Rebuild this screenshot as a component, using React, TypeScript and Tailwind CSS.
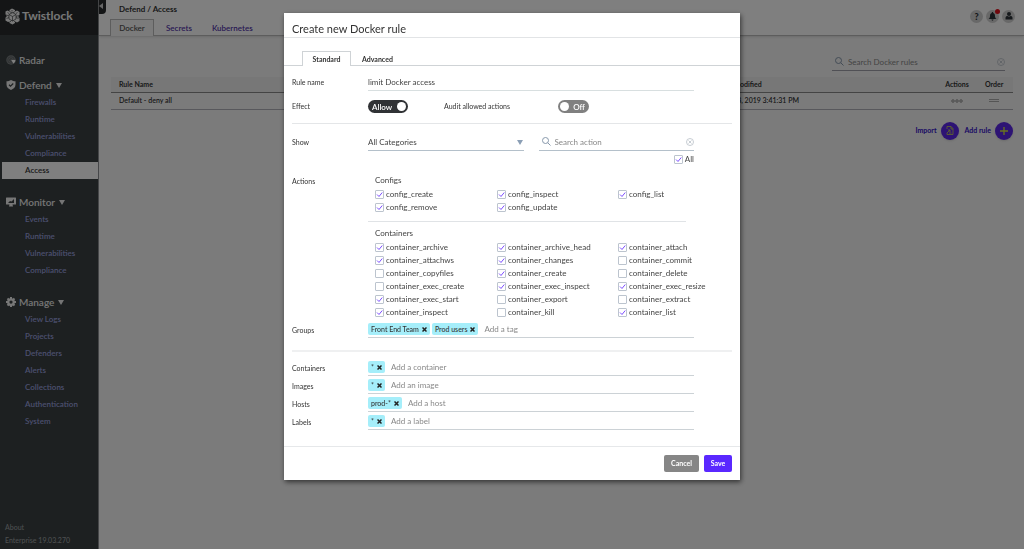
import type { ReactNode } from "react";

const menus = [
  {
    title: "Defend",
    icon: "shield",
    items: ["Firewalls", "Runtime", "Vulnerabilities", "Compliance", "Access"],
  },
  {
    title: "Monitor",
    icon: "monitor",
    items: ["Events", "Runtime", "Vulnerabilities", "Compliance"],
  },
  {
    title: "Manage",
    icon: "gear",
    items: ["View Logs", "Projects", "Defenders", "Alerts", "Collections", "Authentication", "System"],
  },
];

const configs = [
  ["config_create", true],
  ["config_inspect", true],
  ["config_list", true],
  ["config_remove", true],
  ["config_update", true],
] as [string, boolean][];

const containers = [
  ["container_archive", true],
  ["container_archive_head", true],
  ["container_attach", true],
  ["container_attachws", true],
  ["container_changes", true],
  ["container_commit", false],
  ["container_copyfiles", false],
  ["container_create", true],
  ["container_delete", false],
  ["container_exec_create", false],
  ["container_exec_inspect", true],
  ["container_exec_resize", true],
  ["container_exec_start", true],
  ["container_export", false],
  ["container_extract", false],
  ["container_inspect", true],
  ["container_kill", false],
  ["container_list", true],
] as [string, boolean][];

function MenuIcon({ name }: { name: string }) {
  if (name === "radar") {
    return (
      <svg className="w-[10px] h-[10px]" viewBox="0 0 20 20">
        <circle cx="10" cy="10" r="9.5" fill="#7c8082" />
        <circle cx="10" cy="10" r="6.5" fill="none" stroke="#4d5355" strokeWidth="1.2" />
        <circle cx="10" cy="10" r="3" fill="none" stroke="#4d5355" strokeWidth="1.2" />
        <path d="M9 9h11a10 10 0 0 1-5.500 9z" fill="#fff" stroke="#3a4143" strokeWidth="1" />
      </svg>
    );
  }
  if (name === "shield") {
    return (
      <svg className="w-[10px] h-[10px]" viewBox="0 0 20 20">
        <path d="M10 0c3 2 6 2.500 9 2.500V9c0 5.500-4 9-9 11-5-2-9-5.500-9-11V2.500C4 2.500 7 2 10 0z" fill="#eee" />
        <path d="M6 9.500l3 3 5.500-5.500" fill="none" stroke="#3a4143" strokeWidth="2.200" />
      </svg>
    );
  }
  if (name === "monitor") {
    return (
      <svg className="w-[10px] h-[10px]" viewBox="0 0 20 20">
        <path d="M1 1h18a1 1 0 0 1 1 1v12a1 1 0 0 1-1 1h-6l1 4H6l1-4H1a1 1 0 0 1-1-1V2a1 1 0 0 1 1-1z" fill="#eee" />
        <path d="M4 12l4-4 3 1 5-5v8z" fill="#3a4143" />
      </svg>
    );
  }
  return (
    <svg className="w-[10px] h-[10px]" viewBox="0 0 20 20">
      <circle cx="10" cy="10" r="5.500" fill="none" stroke="#eee" strokeWidth="4.500" />
      <path d="M10 0v4M10 16v4M0 10h4M16 10h4M3 3l3 3M14 14l3 3M17 3l-3 3M6 14l-3 3" stroke="#eee" strokeWidth="4" />
    </svg>
  );
}

function Caret() {
  return (
    <svg className="w-[6px] h-[5px]" viewBox="0 0 6 5">
      <path d="M0 0h6L3 5z" fill="currentColor" />
    </svg>
  );
}

function SearchIcon() {
  return (
    <svg className="w-[9px] h-[9px] shrink-0" viewBox="0 0 18 18" fill="none" stroke="#8798ab" strokeWidth="2">
      <circle cx="7" cy="7" r="6" />
      <path d="M11.500 11.500L17 17" />
    </svg>
  );
}

function ClearIcon() {
  return (
    <svg className="w-2 h-2" viewBox="0 0 16 16" fill="none" stroke="#b4bcc4" strokeWidth="1.500">
      <circle cx="8" cy="8" r="7" />
      <path d="M5 5l6 6M11 5l-6 6" />
    </svg>
  );
}

function Logo() {
  return (
    <svg className="w-[15px] h-[17px] shrink-0" viewBox="0 0 30 34">
      <path d="M14 1l6 3v3l4-2 5 3v6l-2 1v4l2 1v6l-5 3-4-2v3l-5 3-6-3v-3l-3 1-5-3v-6l2-1v-4l-2-1V7l4-2 4 2V4z" fill="#f2f2f2" />
      <g fill="none" stroke="#282b2d" strokeWidth="1.200">
        <path d="M15 9l7 4v9l-7 4-7-4v-9zM8 13l7 4 7-4M15 17v9" />
        <path d="M9 7l5 3M20 7l-5 3M3 14l5 2M27 15l-5 2M3 21l5-2M27 21l-5-2M10 28l3-3M20 28l-3-3M14 4v3M5 9l3 2M25 9l-3 2" />
      </g>
    </svg>
  );
}

function Sidebar() {
  return (
    <aside className="w-[99px] shrink-0 flex flex-col bg-[#3a4143] border-r border-[#8c8f92]">
      <div className="h-[35px] bg-[#282b2d] flex items-center pl-[5px] gap-[2px] pb-[3px] text-[#eee] text-[12px] font-bold">
        <Logo />
        <span>Twistlock</span>
      </div>
      <nav className="text-[#eaeaea]">
        <a href="#radar" className="mt-[17px] h-4 flex items-center gap-[3px] pl-[6px] text-[10px] font-semibold">
          <MenuIcon name="radar" />
          Radar
        </a>
        <div className="mt-[9px] flex flex-col gap-[15px]">
          {menus.map((menu) => (
            <div key={menu.title}>
              <button className="h-4 flex items-center gap-[3px] pl-[6px] text-[10px] font-semibold">
                <MenuIcon name={menu.icon} />
                <span className="mr-px">{menu.title}</span>
                <Caret />
              </button>
              <ul className="mt-px text-[8px] leading-[17px] font-semibold text-[#989fdc]">
                {menu.items.map((item) => (
                  <li key={item}>
                    <a
                      href="#menu"
                      className={item === "Access" ? "block ml-[2px] pl-[23px] bg-white text-[#333]" : "block pl-[25px]"}
                    >
                      {item}
                    </a>
                  </li>
                ))}
              </ul>
            </div>
          ))}
        </div>
      </nav>
      <div className="mt-auto pl-[5px] pb-[2px] text-[7px] leading-[13px] text-[#999d9f] font-medium">
        <p>About</p>
        <p>Enterprise 19.03.270</p>
      </div>
    </aside>
  );
}

function RoundIcon({ label, children }: { label: string; children: ReactNode }) {
  return (
    <button aria-label={label} className="relative w-[13px] h-[13px] rounded-full bg-[#d0d0d0] flex items-center justify-center text-[#2c3338]">
      {children}
    </button>
  );
}

function TopBar() {
  return (
    <header className="relative h-9 bg-white border-b border-[#bbb] shadow-sm flex justify-between">
      <button aria-label="Collapse" className="absolute left-0 top-0 w-[7px] h-[14px] pt-[3px] flex items-start bg-[#282b2d] rounded-br-sm">
        <svg className="w-[5px] h-[6px]" viewBox="0 0 5 6">
          <path d="M4 0v6L0 3z" fill="#ccc" />
        </svg>
      </button>
      <div className="pl-[11px] flex flex-col justify-between">
        <h1 className="pl-[9px] pt-[3px] text-[8px] leading-[13px] font-bold text-[#333]">Defend / Access</h1>
        <nav className="flex items-end text-[8px] leading-4 font-semibold text-[#5233a8] -mb-px">
          <a href="#docker" className="w-11 text-center bg-[#f7f7f7] border border-b-0 border-[#bbb] text-[#555]">Docker</a>
          <a href="#secrets" className="pl-3">Secrets</a>
          <a href="#kubernetes" className="pl-5">Kubernetes</a>
        </nav>
      </div>
      <div className="flex items-center gap-[3px] pr-[9px] pb-[3px]">
        <RoundIcon label="Help">
          <span className="text-[9px] leading-none font-black">?</span>
        </RoundIcon>
        <RoundIcon label="Notifications">
          <svg className="w-[9px] h-[9px]" viewBox="0 0 18 18" fill="currentColor">
            <path d="M9 0c1.200 0 1.500 1 1.500 1.800C13 2.500 14 5 14 8c0 3 1 4.500 3 6H1c2-1.500 3-3 3-6 0-3 1-5.500 3.500-6.200C7.500 1 7.800 0 9 0zM7 15h4c0 3-4 3-4 0z" />
          </svg>
          <span className="absolute -top-px -right-px w-[5px] h-[5px] rounded-full bg-[#e0101c]"></span>
        </RoundIcon>
        <RoundIcon label="Account">
          <svg className="w-2 h-2" viewBox="0 0 16 16" fill="currentColor">
            <circle cx="8" cy="4" r="4" />
            <path d="M1 15v-3c0-3 2-4 4-4 2 1.500 4 1.500 6 0 2 0 4 1 4 4v3z" />
          </svg>
        </RoundIcon>
      </div>
    </header>
  );
}

function RulesPage() {
  return (
    <main className="flex-1 bg-[#f7f7f7]">
      <TopBar />
      <div className="pl-3 pr-[11px] pt-[17px]">
        <label className="ml-auto mr-2 w-[173px] h-[18px] flex items-center gap-1 pl-[3px] border-b border-[#a0a0aa]">
          <SearchIcon />
          <input aria-label="Search rules" placeholder="Search Docker rules" className="flex-1 min-w-0 text-[8px] placeholder:text-[#888]" />
          <ClearIcon />
        </label>
        <table className="mt-[6px] w-full table-fixed text-[7px] text-left font-semibold text-[#333]">
          <thead>
            <tr className="h-[15px] bg-[#efefef] border-b border-[#888]">
              <th className="pl-2 w-[608px]">Rule Name</th>
              <th>Last Modified</th>
              <th className="w-[50px] text-center">Actions</th>
              <th className="w-[31px] pl-[3px]">Order</th>
            </tr>
          </thead>
          <tbody>
            <tr className="h-[17px] border-b border-[#b0b0b8]">
              <td className="pl-2">Default - deny all</td>
              <td className="pl-1">Mar 8, 2019 3:41:31 PM</td>
              <td>
                <svg className="mx-auto w-3 h-1" viewBox="0 0 24 8" fill="none" stroke="#777" strokeWidth="1.600">
                  <circle cx="4" cy="4" r="2.500" />
                  <circle cx="12" cy="4" r="2.500" />
                  <circle cx="20" cy="4" r="2.500" />
                </svg>
              </td>
              <td>
                <svg className="ml-[7px] w-[10px] h-[3px]" viewBox="0 0 10 3">
                  <path d="M0 .5h10M0 2.500h10" stroke="#aaa" />
                </svg>
              </td>
            </tr>
          </tbody>
        </table>
        <div className="mt-3 flex justify-end items-center text-[7px] font-bold text-[#3310c8]">
          <button className="flex items-center gap-1">
            Import
            <span className="w-[18px] h-[18px] rounded-full bg-[#5b26e8] flex items-center justify-center shadow">
              <svg className="w-2 h-[9px]" viewBox="0 0 16 18" fill="none" stroke="#c8d84a" strokeWidth="1.600">
                <path d="M2 6V1h8l4 4v12H2v-3M10 1v5h4M2 14l6-6M4 8h4v4M6 14h5" />
              </svg>
            </span>
          </button>
          <button className="ml-[6px] flex items-center gap-1">
            Add rule
            <span className="w-[18px] h-[18px] rounded-full bg-[#5b26e8] flex items-center justify-center shadow">
              <svg className="w-2 h-2" viewBox="0 0 8 8">
                <path d="M4 0v8M0 4h8" stroke="#d4e83c" strokeWidth="1.300" />
              </svg>
            </span>
          </button>
        </div>
      </div>
    </main>
  );
}

function Check({ name, checked }: { name: string; checked: boolean }) {
  return (
    <label className="flex items-center gap-[2px] leading-[13px] whitespace-nowrap">
      <span className="relative w-[9px] h-[9px] shrink-0">
        <input type="checkbox" defaultChecked={checked} className="peer block appearance-none w-[9px] h-[9px] border border-[#bcc4ce] rounded-[1px] bg-white" />
        <svg className="absolute inset-0 w-[9px] h-[9px] hidden peer-checked:block pointer-events-none" viewBox="0 0 18 18">
          <path d="M4 9l4 4 6.500-8" fill="none" stroke="#7c4dff" strokeWidth="2" />
        </svg>
      </span>
      {name}
    </label>
  );
}

function ActionGroup({ title, actions }: { title: string; actions: [string, boolean][] }) {
  return (
    <fieldset className="pl-[7px]">
      <legend className="leading-[14px]">{title}</legend>
      <div className="mt-px grid grid-cols-[122px_121px_auto]">
        {actions.map(([name, checked]) => (
          <Check key={name} name={name} checked={checked} />
        ))}
      </div>
    </fieldset>
  );
}

function Tag({ name }: { name: string }) {
  return (
    <span className="h-3 flex items-center gap-[3px] px-[3px] bg-[#a5eefa] rounded-[2px] text-[7px] font-medium text-[#333] whitespace-nowrap">
      {name}
      <button aria-label={"Remove " + name}>
        <svg className="w-[5px] h-[5px]" viewBox="0 0 5 5">
          <path d="M.5 .5l4 4M4.500 .5l-4 4" stroke="#222" strokeWidth="1.500" />
        </svg>
      </button>
    </span>
  );
}

function TagRow({ label, tags, hint }: { label: string; tags: string[]; hint: string }) {
  return (
    <div className="h-[18px] flex">
      <label htmlFor={label} className="w-[76px] shrink-0 text-[7px] leading-4 text-[#333]">{label}</label>
      <div className="flex-1 mr-[38px] h-4 pb-px flex items-center gap-[2px] border-b border-[#ccd2d6]">
        {tags.map((tag) => (
          <Tag key={tag} name={tag} />
        ))}
        <input id={label} placeholder={hint} className="flex-1 min-w-0 pl-1 pb-px text-[8px] placeholder:text-[#888]" />
      </div>
    </div>
  );
}

function RuleDialog() {
  return (
    <div className="fixed inset-0 bg-black/50 overflow-auto">
      <div role="dialog" aria-label="Create new Docker rule" className="w-full max-w-[456px] mx-auto mt-[13px] bg-white text-[#444] text-[8px] shadow-[1px_2px_5px_rgba(0,0,0,0.6)]">
        <h2 className="h-[25px] pt-[6px] pl-2 text-[11px] leading-5 text-[#333] border-b border-[#e2e4e6]">Create new Docker rule</h2>
        <div role="tablist" className="mt-[13px] h-[15px] pl-[18px] flex text-[7px] font-bold text-[#333] border-b border-[#cfd3d6]">
          <button role="tab" aria-selected="true" className="w-[49px] h-[15px] pt-px bg-white border border-b-0 border-[#cfd3d6]">Standard</button>
          <button role="tab" aria-selected="false" className="h-[15px] pt-[2px] px-[11px]">Advanced</button>
        </div>
        <div className="px-2">
          <div className="mt-[7px] h-[18px] flex">
            <label htmlFor="rule" className="w-[76px] text-[7px] leading-[18px] text-[#333]">Rule name</label>
            <input id="rule" defaultValue="limit Docker access" className="flex-1 mr-[38px] border-b border-[#d8dfe0]" />
          </div>
          <div className="mt-[9px] pb-[10px] flex items-center text-[7px] text-[#333] border-b border-[#e4e6e8]">
            <span className="w-[76px]">Effect</span>
            <button role="switch" aria-checked="true" className="w-10 h-[13px] rounded-full bg-[#303235] text-white text-[8px] font-semibold flex items-center justify-between pl-1 pr-[2px]">
              Allow
              <span className="w-[9px] h-[9px] rounded-full bg-white"></span>
            </button>
            <span className="ml-9 w-[114px]">Audit allowed actions</span>
            <button role="switch" aria-checked="false" className="w-[31px] h-[13px] rounded-full bg-[#808080] text-white text-[8px] font-semibold flex items-center justify-between pl-[2px] pr-1">
              <span className="w-[9px] h-[9px] rounded-full bg-white"></span>
              Off
            </button>
          </div>
          <div className="mt-[9px] mr-[38px] h-[18px] flex">
            <label htmlFor="show" className="w-[76px] text-[7px] leading-[18px] text-[#333]">Show</label>
            <div className="flex-1 grid grid-cols-2 gap-[15px]">
              <div className="relative">
                <select id="show" className="w-full h-[18px] appearance-none border-b border-[#b4c0ca]">
                  <option>All Categories</option>
                </select>
                <span className="absolute right-px top-[7px] text-[#8b9fb5] pointer-events-none">
                  <Caret />
                </span>
              </div>
              <label className="flex items-center gap-1 pl-[3px] border-b border-[#b4c0ca]">
                <SearchIcon />
                <input aria-label="Search action" placeholder="Search action" className="flex-1 min-w-0 placeholder:text-[#888]" />
                <ClearIcon />
              </label>
            </div>
          </div>
          <div className="mt-[2px] mr-[38px] flex justify-end">
            <Check name="All" checked={true} />
          </div>
          <div className="mt-[7px] flex">
            <span className="w-[76px] text-[7px] leading-4 text-[#333]">Actions</span>
            <div className="flex-1">
              <ActionGroup title="Configs" actions={configs} />
              <hr className="mt-[7px] mb-1 mr-[46px] border-[#e0e3e6]" />
              <ActionGroup title="Containers" actions={containers} />
            </div>
          </div>
          <div className="mt-[3px] pb-[10px] border-b-2 border-[#eff0f1]">
            <TagRow label="Groups" tags={["Front End Team", "Prod users"]} hint="Add a tag" />
          </div>
          <div className="pt-2 pb-[14px]">
            <TagRow label="Containers" tags={["*"]} hint="Add a container" />
            <TagRow label="Images" tags={["*"]} hint="Add an image" />
            <TagRow label="Hosts" tags={["prod-*"]} hint="Add a host" />
            <TagRow label="Labels" tags={["*"]} hint="Add a label" />
          </div>
        </div>
        <div className="flex justify-end gap-[5px] px-2 py-2 border-t border-[#e6e8ea] text-[7px] font-bold text-white">
          <button className="w-[35px] h-[17px] rounded-[2px] bg-[#868686]">Cancel</button>
          <button className="w-7 h-[17px] rounded-[2px] bg-[#5a28ff]">Save</button>
        </div>
      </div>
    </div>
  );
}

export default function App() {
  return (
    <div className="min-h-screen flex font-['Lato',sans-serif]">
      <Sidebar />
      <RulesPage />
      <RuleDialog />
    </div>
  );
}
